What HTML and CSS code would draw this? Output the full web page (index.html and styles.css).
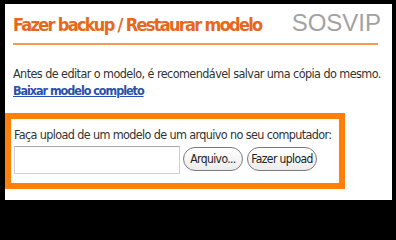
FILE: index.html
```html
<!DOCTYPE html>
<html lang="pt">
<head>
<meta charset="utf-8">
<link rel="stylesheet" href="styles.css">
</head>
<body>
<div class="frame">
  <div class="header">
    <h2 class="title">Fazer backup / Restaurar modelo</h2>
    <span class="mark">SOSVIP</span>
  </div>
  <p class="intro">Antes de editar o modelo, é recomendável salvar uma cópia do mesmo.</p>
  <a class="download" href="#">Baixar modelo completo</a>
  <div class="upload">
    <div class="upload-label">Faça upload de um modelo de um arquivo no seu computador:</div>
    <div class="upload-row">
      <div class="file-field"></div>
      <button class="btn btn-file" type="button">Arquivo...</button>
      <button class="btn btn-send" type="button">Fazer upload</button>
    </div>
  </div>
</div>
</body>
</html>
```
FILE: styles.css
```css
html, body {
  margin: 0;
  padding: 0;
  background: #000;
}
.frame {
  box-sizing: border-box;
  width: 396px;
  height: 204px;
  background: #fff;
  border-style: solid;
  border-color: #000;
  border-width: 4px 4px 4px 5px;
  font-family: "DejaVu Sans Condensed", "DejaVu Sans", sans-serif;
  color: #333;
  display: flex;
  flex-direction: column;
  align-items: flex-start;
}
.header {
  box-sizing: border-box;
  width: 365px;
  height: 41px;
  margin-left: 8px;
  padding-top: 8px;
  display: flex;
  align-items: baseline;
  justify-content: space-between;
  border-bottom: 2px solid #f59a50;
}
.title {
  margin: 0;
  font-size: 18px;
  line-height: 22px;
  font-weight: bold;
  letter-spacing: -1.7px;
  color: #e8671a;
  white-space: nowrap;
}
.mark {
  font-family: "Liberation Sans", sans-serif;
  font-size: 24px;
  line-height: 22px;
  color: #a2a2a2;
  margin-right: -3px;
}
.intro {
  margin: 21px 0 0 8px;
  font-size: 12.5px;
  line-height: 15px;
  letter-spacing: -0.57px;
  white-space: nowrap;
}
.download {
  margin: 2px 0 0 8px;
  font-size: 12.5px;
  line-height: 15px;
  font-weight: bold;
  letter-spacing: -1.05px;
  color: #2b4fad;
}
.upload {
  box-sizing: border-box;
  margin-top: 15px;
  width: 340px;
  height: 76px;
  border: 6px solid #ff7f0a;
  padding: 8px 0 0 3px;
}
.upload-label {
  font-size: 12.5px;
  line-height: 15px;
  letter-spacing: -0.63px;
  white-space: nowrap;
}
.upload-row {
  display: flex;
  align-items: flex-start;
  margin-top: 4px;
}
.file-field {
  box-sizing: border-box;
  width: 166px;
  height: 28px;
  border: 1px solid #cfcfcf;
  border-top-color: #a9a9a9;
}
.btn {
  box-sizing: border-box;
  margin-top: 1px;
  height: 24px;
  padding: 0;
  font-family: "DejaVu Sans Condensed", "DejaVu Sans", sans-serif;
  font-size: 12px;
  letter-spacing: -0.6px;
  color: #222;
  border: 1px solid #7a7a7a;
  border-radius: 12px;
  background: linear-gradient(#ffffff, #ececec);
}
.btn-file {
  width: 60px;
  margin-left: 3px;
}
.btn-send {
  width: 70px;
  margin-left: 4px;
}
```
